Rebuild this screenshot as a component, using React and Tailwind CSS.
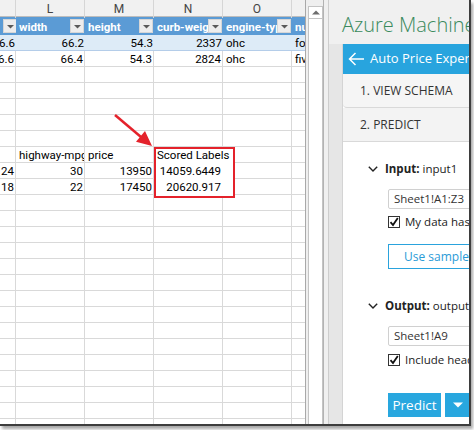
import clsx from "clsx"

const GRID = "grid grid-cols-[16px_69px_69px_69px_69px_13px]"

const head = [
  { t: "length", btn: true, hide: true },
  { t: "width", btn: true },
  { t: "height", btn: true },
  { t: "curb-weight", btn: true },
  { t: "engine-type", btn: true },
  { t: "num-of-cylinders" },
]

const r = v => ({ v, r: true })
const l = (v, clip) => ({ v, clip })
const empty = [null, null, null, null, null, null]

const body = [
  { band: true, cells: [r("176.6"), r("66.2"), r("54.3"), r("2337"), l("ohc"), l("four")] },
  { cells: [r("176.6"), r("66.4"), r("54.3"), r("2824"), l("ohc"), l("five")] },
  { cells: empty },
  { cells: empty },
  { cells: empty },
  { cells: empty },
  { cells: empty },
  { cells: [null, l("highway-mpg", true), l("price"), l("Scored Labels"), null, null] },
  { cells: [r("24"), r("30"), r("13950"), r("14059.6449"), null, null] },
  { cells: [r("18"), r("22"), r("17450"), r("20620.917"), null, null] },
  ...Array.from({ length: 15 }, () => ({ cells: empty })),
]

function FilterBtn() {
  return (
    <div className="w-[14px] h-[14px] shrink-0 mr-[1px] bg-[#ededed] border border-[#d6d6d6] flex items-center justify-center">
      <svg width="7" height="5" viewBox="0 0 7 5">
        <path d="M0 1h7l-3.5 3.5z" fill="#5a5a5a" />
      </svg>
    </div>
  )
}

function Sheet() {
  return (
    <div className="relative w-[305px] h-full overflow-hidden font-['Roboto',sans-serif] text-[11.5px] text-black">
      <div className={clsx(GRID, "h-[17px] bg-[#f1f1f1] border-b border-[#bdbdbd]")}>
        {["", "L", "M", "N", "O", ""].map((c, i) => (
          <div key={i} className={clsx("h-full text-center text-[#444] text-[12px] leading-[17px] pt-[1px]", i < 5 && "border-r border-[#d6d6d6]")}>
            {c}
          </div>
        ))}
      </div>
      <div className={clsx(GRID, "h-[18px] bg-[#5b9bd5]")}>
        {head.map((h, i) => (
          <div key={i} className="flex items-center overflow-hidden">
            <span className="flex-1 min-w-0 overflow-hidden whitespace-nowrap pl-[3px] font-bold text-white leading-[18px] pt-[2px]">
              {h.hide ? "" : h.t}
            </span>
            {h.btn && <FilterBtn />}
          </div>
        ))}
      </div>
      {body.map((row, ri) => (
        <div key={ri} className={GRID}>
          {row.cells.map((c, i) => (
            <div
              key={i}
              className={clsx(
                "h-4 border-b whitespace-nowrap leading-[17px] flex",
                row.band ? "bg-[#ddebf7] border-[#b4cde9]" : "border-[#d9d9d9]",
                !row.band && i < 5 && "border-r",
                c?.r ? "justify-end pr-[1px]" : "pl-[3px]",
                c?.clip && "overflow-hidden"
              )}
            >
              {c && <span className="relative z-20">{c.v}</span>}
            </div>
          ))}
        </div>
      ))}
      <div className="absolute left-[154px] top-[147px] w-[81px] h-[51px] border-2 border-[#e4222b] bg-white z-10" />
      <svg className="absolute left-0 top-0 z-30 pointer-events-none" width="305" height="200">
        <line x1="115" y1="115" x2="141" y2="137" stroke="#e4222b" strokeWidth="2.5" />
        <path d="M152 146 L136 141.8 L145 131 Z" fill="#e4222b" />
      </svg>
    </div>
  )
}

function Scrollbar() {
  return (
    <div className="w-[18px] h-full border-l border-[#a9a9a9] bg-[#efefef] flex shrink-0">
      <div className="ml-[2px] mt-[6px] w-[15px] border-x border-[#c4c4c4] bg-white flex flex-col">
        <div className="h-[13px] border-y border-[#c4c4c4] flex items-center justify-center">
          <svg width="8" height="5" viewBox="0 0 8 5">
            <path d="M0 4.5h8L4 0.5z" fill="#6d6d6d" />
          </svg>
        </div>
      </div>
    </div>
  )
}

function Chevron() {
  return (
    <svg width="10" height="6" viewBox="0 0 10 6" className="shrink-0">
      <path d="M0.8 0.8l4.2 4.2 4.2-4.2" fill="none" stroke="#222" strokeWidth="1.4" />
    </svg>
  )
}

function Check() {
  return (
    <div className="w-[12px] h-[12px] border border-[#333] bg-white flex items-center justify-center shrink-0">
      <svg width="10" height="10" viewBox="0 0 10 10">
        <path d="M1.5 5.2l2.5 2.8 4.8-7" fill="none" stroke="#111" strokeWidth="1.8" />
      </svg>
    </div>
  )
}

function Section({ label, name, range, check, gap }) {
  return (
    <div className="flex flex-col">
      <div className="flex items-center h-4 pl-[25px] gap-[7px] whitespace-nowrap text-[11.5px] text-[#222]">
        <Chevron />
        <span>
          <b className="font-bold">{label}:</b> {name}
        </span>
      </div>
      <div className="mt-[12px] ml-[45px] w-[120px] h-[20px] shrink-0 border border-[#d0d0d0] rounded-[2px] pl-[5px] text-[11.5px] leading-[18px] text-[#333] whitespace-nowrap">
        {range}
      </div>
      <div className={clsx("ml-[45px] h-[12px] flex items-center gap-[5px] whitespace-nowrap text-[11.5px] text-[#222]", gap)}>
        <Check />
        <span>{check}</span>
      </div>
    </div>
  )
}

function Pane() {
  return (
    <div className="w-[146px] h-full shrink-0 flex border-l border-[#b3b3b3] bg-[#f0f0f0] overflow-hidden font-['Open_Sans',sans-serif]">
      <div className="w-[4px] shrink-0" />
      <div className="flex-1 flex flex-col border-l border-[#cdcdcd] min-w-0">
        <div className="h-[44px] shrink-0 pl-[13px] pt-[12px] text-[20px] font-light leading-[26px] text-[#3a8a5c] whitespace-nowrap">
          Azure Machine Learning
        </div>
        <div className="flex flex-1">
          <div className="w-[13px] shrink-0 bg-[#e6e6e6]" />
          <div className="flex-1 flex flex-col bg-white border-l border-[#d4d4d4] min-w-[130px]">
            <div className="h-[30px] shrink-0 bg-[#28a4de] flex items-center pl-[5px] gap-[5px] text-white text-[13px] whitespace-nowrap">
              <svg width="17" height="14" viewBox="0 0 17 14" className="shrink-0">
                <path d="M16 7H1.5M7.5 1L1.5 7l6 6" fill="none" stroke="#fff" strokeWidth="1.5" />
              </svg>
              <span>Auto Price Experiment</span>
            </div>
            <div className="h-[34px] shrink-0 bg-[#f5f5f5] border-b border-[#d9d9d9] rounded-bl-[4px] pl-[17px] flex items-center text-[12px] text-[#333] whitespace-nowrap">
              1. VIEW SCHEMA
            </div>
            <div className="h-[34px] shrink-0 bg-[#f3f3f3] border-b border-[#d9d9d9] pl-[17px] flex items-center text-[12px] text-[#333] whitespace-nowrap">
              2. PREDICT
            </div>
            <div className="flex flex-col pt-[19px]">
              <Section label="Input" name="input1" range="Sheet1!A1:Z3" check="My data has headers" gap="mt-[7px]" />
              <div className="mt-[16px] ml-[45px] w-[120px] h-[25px] shrink-0 border border-[#2aa3dd] pl-[15px] text-[12px] leading-[23px] text-[#2a9bd7] whitespace-nowrap">
                Use sample data
              </div>
              <div className="mt-[29px]">
                <Section label="Output" name="output1" range="Sheet1!A9" check="Include headers" gap="mt-[8px]" />
              </div>
              <div className="mt-[27px] ml-[45px] flex gap-[4px]">
                <div className="w-[53px] h-[24px] bg-[#28a7df] text-white text-[13.5px] leading-[24px] text-center">Predict</div>
                <div className="w-[25px] h-[24px] bg-[#28a7df] flex items-center justify-center">
                  <svg width="10" height="6" viewBox="0 0 10 6">
                    <path d="M0 0.5h10L5 5.5z" fill="#fff" />
                  </svg>
                </div>
              </div>
            </div>
          </div>
        </div>
      </div>
    </div>
  )
}

export default function App() {
  return (
    <div className="w-[474px] h-[430px] bg-white overflow-hidden">
      <div className="w-[471px] h-[426px] flex bg-white border-r-2 border-b-2 border-[#3d3d3d] shadow-[2px_3px_3px_rgba(0,0,0,0.35)] overflow-hidden">
        <Sheet />
        <Scrollbar />
        <Pane />
      </div>
    </div>
  )
}
